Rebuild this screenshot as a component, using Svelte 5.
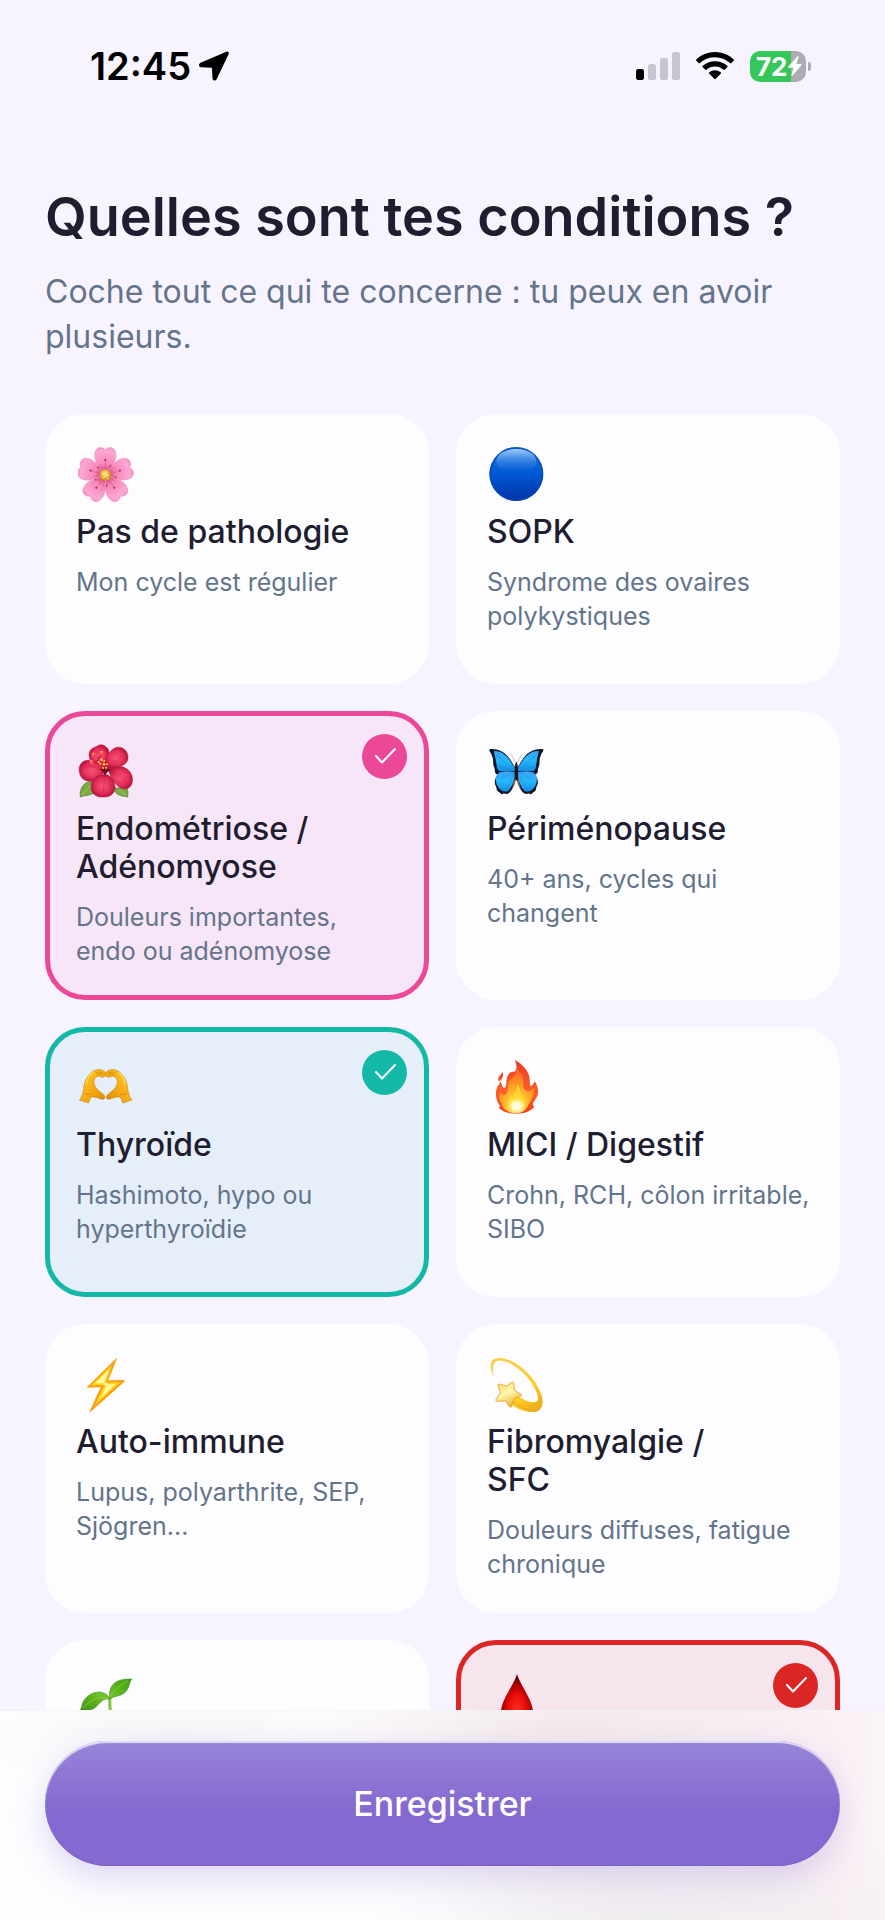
<script>
  let conditions = $state([
    { id: 'none', icon: 'blossom', title: 'Pas de pathologie', text: 'Mon cycle est régulier', tone: 'pink', checked: false },
    { id: 'sopk', icon: 'circle', title: 'SOPK', text: 'Syndrome des ovaires polykystiques', tone: 'pink', checked: false },
    { id: 'endo', icon: 'hibiscus', title: 'Endométriose / Adénomyose', text: 'Douleurs importantes, endo ou adénomyose', tone: 'pink', checked: true },
    { id: 'peri', icon: 'butterfly', title: 'Périménopause', text: '40+ ans, cycles qui changent', tone: 'pink', checked: false },
    { id: 'thyroid', icon: 'hands', title: 'Thyroïde', text: 'Hashimoto, hypo ou hyperthyroïdie', tone: 'teal', checked: true },
    { id: 'mici', icon: 'fire', title: 'MICI / Digestif', text: 'Crohn, RCH, côlon irritable, SIBO', tone: 'pink', checked: false },
    { id: 'auto', icon: 'bolt', title: 'Auto-immune', text: 'Lupus, polyarthrite, SEP, Sjögren...', tone: 'pink', checked: false },
    { id: 'fibro', icon: 'star', title: 'Fibromyalgie / SFC', text: 'Douleurs diffuses, fatigue chronique', tone: 'pink', checked: false },
    { id: 'sprout', icon: 'sprout', title: '', text: '', tone: 'teal', checked: false },
    { id: 'drop', icon: 'drop', title: '', text: '', tone: 'red', checked: true }
  ]);

  const boxes = {
    blossom: '57 48 168 168',
    circle: '60 48 168 168',
    hibiscus: '57 39 168 168',
    butterfly: '60 39 168 168',
    hands: '57 57 168 168',
    fire: '60 57 168 168',
    bolt: '57 45 168 168',
    star: '60 45 168 168',
    sprout: '0 0 56 56',
    drop: '0 0 56 56'
  };
  const turns = [0, 72, 144, 216, 288];
</script>

<div class="app">
  <header class="status">
    <div class="clock">
      <span>12:45</span>
      <svg width="30" height="30" viewBox="0 0 30 30" aria-hidden="true">
        <path d="M27.600 1.200 1.800 12.200C0 13.200.3 15.600 2.200 15.700l10.400.4c.8 0 1 .3 1 1l.5 10.400c.1 1.800 2.300 2 3 .4L29 3C29.500 1.600 28.800.7 27.600 1.200Z" stroke="#000" stroke-width="1.200" stroke-linejoin="round" />
      </svg>
    </div>
    <div class="signals">
      <svg width="44" height="28" viewBox="0 0 44 28" aria-hidden="true">
        <rect x="0" y="17" width="8" height="11" rx="2.500" />
        <g fill="#c8c5d0">
          <rect x="12" y="12" width="8" height="16" rx="2.500" />
          <rect x="24" y="6" width="8" height="22" rx="2.500" />
          <rect x="36" y="0" width="8" height="28" rx="2.500" />
        </g>
      </svg>
      <svg width="38" height="28" viewBox="0 0 38 28" aria-hidden="true">
        <path d="M19 0C11.700 0 5.200 2.800.4 7.400c-.5.5-.5 1 0 1.400l2.200 2.300c.4.4.9.4 1.300 0A22 22 0 0 1 19 5.200c5.800 0 11.100 2.200 15.100 5.900.4.400.9.400 1.300 0l2.200-2.300c.5-.4.5-.9 0-1.400C32.800 2.800 26.300 0 19 0Z" />
        <path d="M19 9.200c-4.700 0-9 1.700-12.300 4.600-.5.400-.5.900-.1 1.300l2.500 2.500c.4.400.9.400 1.300.1A13 13 0 0 1 19 14.400c3.300 0 6.300 1.200 8.600 3.300.4.300.9.300 1.300-.1l2.500-2.500c.4-.4.4-.9-.1-1.300A18.500 18.500 0 0 0 19 9.200Z" />
        <path d="M19 18.300c-2.200 0-4.200.8-5.700 2-.6.500-.5 1 0 1.500l5 5c.5.500.9.500 1.400 0l5-5c.5-.5.600-1 0-1.500a9 9 0 0 0-5.700-2Z" />
      </svg>
      <div class="battery">
        <span>72</span>
        <svg width="14" height="20" viewBox="0 0 14 20" aria-hidden="true">
          <path d="M9.500.3.400 10.600c-.5.600-.2 1.200.5 1.200h4.600l-2 7.200c-.3.900.6 1.200 1.100.6l8.900-10.300c.5-.6.200-1.200-.5-1.200H8.400l2.100-7.200c.3-.9-.5-1.200-1-.6Z" fill="#fff" />
        </svg>
      </div>
    </div>
  </header>

  <main>
    <h1>Quelles sont tes conditions ?</h1>
    <p class="intro">Coche tout ce qui te concerne : tu peux en avoir plusieurs.</p>

    <div class="grid">
      {#each conditions as item (item.id)}
        <label class="card {item.tone}" class:selected={item.checked}>
          <input type="checkbox" bind:checked={item.checked} aria-label={item.title ? undefined : 'Condition'} />
          {#if item.checked}
            <svg class="tick" viewBox="0 0 45 45" aria-hidden="true">
              <path d="m14 22 6 6.500L33 15" fill="none" stroke="#fff" stroke-width="2" stroke-linecap="round" stroke-linejoin="round" />
            </svg>
          {/if}
          <svg class="emoji" viewBox={boxes[item.icon]} aria-hidden="true">
            {#if item.icon === 'blossom'}
              <defs>
                <radialGradient id="petal" gradientUnits="userSpaceOnUse" cx="139" cy="132" r="82">
                  <stop offset=".1" stop-color="#d84b80" /><stop offset=".35" stop-color="#f585b4" /><stop offset=".85" stop-color="#fca8d6" /><stop offset="1" stop-color="#f290bd" />
                </radialGradient>
                <radialGradient id="pollen" cx=".45" cy=".4"><stop offset="0" stop-color="#ffe675" /><stop offset="1" stop-color="#d79420" /></radialGradient>
              </defs>
              {#each turns as t}
                <g transform="rotate({t} 139 136)">
                  <path d="M139 133C121 115 101 90 108 66c4-14 20-18 31-7 11-11 27-7 31 7 6 24-13 49-31 67Z" fill="url(#petal)" stroke="#ee8db5" stroke-width="1.500" />
                  <path d="M139 122V91M133 123l-9-20M145 123l9-20" stroke="#d45b8c" stroke-width="1.500" />
                  <circle cx="139" cy="90" r="3" fill="#8e2145" /><circle cx="155" cy="109" r="2.500" fill="#8e2145" />
                </g>
              {/each}
              <circle cx="139" cy="135" r="17" fill="url(#pollen)" />
              <path d="m130 130 5 3m6-8 1 6m7 4-7 2m-8 7 3-5m8 4 2 4" stroke="#fff2a8" stroke-width="3" stroke-linecap="round" />
            {:else if item.icon === 'circle'}
              <defs>
                <linearGradient id="ball" x2="0" y2="1"><stop offset="0" stop-color="#2a7bd9" /><stop offset=".48" stop-color="#0059d4" /><stop offset="1" stop-color="#0032a6" /></linearGradient>
                <linearGradient id="shine" x2="0" y2="1"><stop offset="0" stop-color="#9fceff" /><stop offset="1" stop-color="#0e63d8" stop-opacity="0" /></linearGradient>
              </defs>
              <circle cx="142" cy="132" r="81" fill="url(#ball)" /><circle cx="142" cy="132" r="78" fill="none" stroke="#0049b8" stroke-width="5" opacity=".7" />
              <ellipse cx="142" cy="94" rx="60" ry="37" fill="url(#shine)" />
            {:else if item.icon === 'hibiscus'}
              <defs>
                <radialGradient id="hib"><stop offset="0" stop-color="#f45378" /><stop offset=".65" stop-color="#e52f59" /><stop offset="1" stop-color="#b91740" /></radialGradient>
              </defs>
              <path d="M64 201c-3-25 9-46 36-48l10 31c-13 15-30 10-46 17ZM206 201c2-13 0-23-4-29l-38 3c5 22 23 22 42 26Z" fill="#7baa43" stroke="#467326" stroke-width="2" />
              <path d="m68 196 28-31m105 32-22-19" stroke="#b5d17c" stroke-width="2" />
              <g fill="url(#hib)" stroke="#b5193e" stroke-width="1.500">
                <path d="M134 118C112 115 85 92 91 69c2-14 15-16 24-21 9-7 23-3 26 4 16 5 6 33 2 60Z" />
                <path d="M136 112c-1-25 16-55 38-60 19-3 34 14 33 30 1 23-28 31-57 34Z" />
                <path d="M137 125C118 94 82 80 66 101c-11 13-5 40 9 48 18 10 45 1 62-24Z" />
                <path d="M148 121c16-18 51-15 65 5 15 20 7 50-15 51-20 1-37-22-50-56Z" />
                <path d="M142 134c-25-4-48 14-46 39 2 22 22 30 38 28 19 2 36-12 34-32-1-18-11-32-26-35Z" />
              </g>
              <path d="M137 126C110 109 88 104 75 114m74 6c23-27 37-42 46-45m-44 50c25 8 43 20 49 35m-62-28c-4 26-5 44-3 58m10-58c10 19 11 33 8 48" fill="none" stroke="#b91a42" stroke-width="2" opacity=".6" />
              <path d="M123 118q14-12 33 2-14 5-17 17-5-11-16-19Z" fill="#76071e" />
              <path d="M142 119 116 83M117 89l11-17M119 92l-20 5" stroke="#cc1643" stroke-width="4" />
              <g fill="#ffd321"><circle cx="119" cy="95" r="3" /><circle cx="127" cy="89" r="4" /><circle cx="136" cy="93" r="3" /><circle cx="124" cy="101" r="3" /><circle cx="135" cy="103" r="4" /><circle cx="144" cy="103" r="3" /><circle cx="132" cy="114" r="3" /><circle cx="141" cy="113" r="3" /></g>
              <g fill="#f44b50"><circle cx="105" cy="74" r="8" /><circle cx="129" cy="69" r="8" /><circle cx="98" cy="97" r="7" /></g>
              <g fill="#ff9b91"><circle cx="103" cy="71" r="3" /><circle cx="127" cy="66" r="3" /><circle cx="96" cy="94" r="3" /></g>
            {:else if item.icon === 'butterfly'}
              <defs><linearGradient id="wing" x2="0" y2="1"><stop offset="0" stop-color="#3aa4f5" /><stop offset=".5" stop-color="#24b7fc" /><stop offset="1" stop-color="#188ae3" /></linearGradient></defs>
              {#each [0, 1] as side}
                <g transform={side ? 'matrix(-1 0 0 1 284 0)' : undefined}>
                  <path d="M61 58c19-4 45 6 59 25 10 13 14 27 21 30v28c-1 18-10 39-22 49-7 6-12-2-18 2-5 3-8-7-13-7-7-3-4-13-9-19-4-12 0-25 8-31-14-6-7-15-12-24-5-12 0-23-6-33-1-8-9-11-8-20Z" fill="#10172a" />
                  <path d="M75 63c17-1 34 9 45 24 8 12 13 22 20 30l-2 7c-15-1-33 2-47-1-9-4-7-17-10-27-1-14-6-23-6-33Z" fill="url(#wing)" />
                  <path d="M138 127c-14-4-33-3-46 0-15 10-13 25-8 38 8 16 20 22 32 19 13-9 22-38 22-57Z" fill="url(#wing)" />
                  <path d="M136 125 80 72m55 54L91 108m45 19-43 20m42-17-20 48" stroke="#126dc0" stroke-width="1.500" opacity=".5" />
                  <path d="m139 98-13-26" stroke="#8a8f98" stroke-width="1.500" />
                  <path d="m137 140-9 41 10-20Z" fill="#9a6546" />
                </g>
              {/each}
              <ellipse cx="142" cy="124" rx="5" ry="28" fill="#171717" />
            {:else if item.icon === 'hands'}
              <defs><linearGradient id="hand" x1="0" y1="0" x2="1" y2="1"><stop offset="0" stop-color="#ffd02a" /><stop offset=".55" stop-color="#f6ac14" /><stop offset="1" stop-color="#d98500" /></linearGradient></defs>
              {#each [0, 1] as side}
                <g transform={side ? 'matrix(-1 0 0 1 280 0)' : undefined}>
                  <path d="M61 180c8-9 12-22 13-35 2-23 13-43 30-52 12-7 27-5 34 3 5 7 3 12-3 15-7 3-13-3-20-2-14 8-13 27 1 40l18 15c8 8 2 16-8 13-11-5-20-7-28-6-5 4-7 11-9 18Z" fill="url(#hand)" stroke="#bd7700" stroke-width="1.500" />
                  <path d="M77 160c7 4 13 5 20 2M110 99c9-4 16-3 21 0m-18 7c7-5 14-4 18-2" fill="none" stroke="#c27b00" stroke-width="2" />
                  <path d="M83 130c1-15 8-26 18-31" fill="none" stroke="#ffe15d" stroke-width="5" stroke-linecap="round" opacity=".7" />
                </g>
              {/each}
            {:else if item.icon === 'fire'}
              <defs>
                <linearGradient id="flame" x2="0" y2="1"><stop offset="0" stop-color="#ec3b29" /><stop offset=".6" stop-color="#fa602b" /><stop offset="1" stop-color="#f53b17" /></linearGradient>
                <radialGradient id="heat" cx=".5" cy=".9" r=".8"><stop offset="0" stop-color="#fffbd5" /><stop offset=".32" stop-color="#ffec38" /><stop offset=".7" stop-color="#ffa51f" /><stop offset="1" stop-color="#ff6c2a" /></radialGradient>
                <radialGradient id="core"><stop offset="0" stop-color="#fffff0" /><stop offset=".5" stop-color="#fffbc4" /><stop offset="1" stop-color="#fff06a" stop-opacity="0" /></radialGradient>
              </defs>
              <path d="M138 60c23 12 44 36 44 58 1 9 0 17 3 21 7-3 9-10 12-15 12 18 14 37 4 51-3 7-7 10-10 17l4 10c-14 15-33 19-52 19-26 0-46-7-54-19l5-3c-12-14-18-38-9-58 4-8 9-12 9-17 5 5 3 16 11 20 8-3 7-11 7-20 2-18 9-32 23-28 12-7 7-22 3-36Z" fill="url(#flame)" />
              <path d="M140 83c18 17 27 29 23 48-2 17 11 25 19 22 7-2 11-8 13-12 1 25-6 38-15 50-8 18-18 28-39 29-24 0-40-13-44-31-7-8-7-22-3-32 8 12 16 10 20 0 7-11 0-29 9-38 10-8 22-15 17-36Z" fill="url(#heat)" opacity=".8" />
              <path d="M145 132c11 15 6 27 16 35 9 10 8 28-1 40-8 11-24 12-33 4-12-10-13-28-5-36 9-8 22-14 23-43Z" fill="#ffe43b" opacity=".55" />
              <ellipse cx="143" cy="198" rx="28" ry="24" fill="url(#core)" />
              <path d="M102 96c-7 7-15 15-15 25l6 2c8-8 10-13 9-27Z" fill="#ef492e" />
            {:else if item.icon === 'bolt'}
              <path d="m172 52-87 85c-3 2-1 4 2 3l38-1-33 72c-1 2 1 3 3 1l101-90c3-3 1-6-3-5l-45 1 25-63c1-3 1-5-1-3Z" fill="#fba112" />
              <path d="m158 73-61 60 40-2-29 61 76-68-43 1Z" fill="#ffd923" />
              <path d="m149 87-40 40 38-2-20 43 42-38-36 1Z" fill="#fffba7" />
            {:else if item.icon === 'star'}
              <defs>
                <linearGradient id="trail" x1="0" y1="0" x2="1" y2="1"><stop offset="0" stop-color="#fccb4c" /><stop offset=".65" stop-color="#ffce25" /><stop offset="1" stop-color="#e7a318" /></linearGradient>
                <linearGradient id="gold" x1=".2" y1="0" x2=".7" y2="1"><stop offset="0" stop-color="#ffdf6e" /><stop offset=".45" stop-color="#fff5b0" /><stop offset="1" stop-color="#e9a91d" /></linearGradient>
              </defs>
              <path d="M76 110C58 78 61 51 91 51c50 2 107 56 126 109 11 34-2 57-33 53-30-3-58-18-72-38l30-14c20 15 42 25 57 22 14-4 7-23-1-39C177 101 132 63 97 59 72 56 67 79 76 110Z" fill="url(#trail)" />
              <path d="M128 178c21 20 52 34 78 27" stroke="#e0a118" stroke-width="4" fill="none" opacity=".6" />
              <path d="M87 133c-2-4 3-4 7-3l19 5 15-11c4-2 7-1 7 4l1 20 19 11c4 3 4 5 0 7l-20 7-7 23c-2 4-4 4-7 0l-12-17-23 2c-6 0-7-3-4-7l12-18Z" fill="url(#gold)" stroke="#eba931" stroke-width="3" />
            {:else if item.icon === 'sprout'}
              <defs><linearGradient id="leaf" x1="0" y1="1" x2="1" y2="0"><stop offset="0" stop-color="#398f13" /><stop offset=".5" stop-color="#72c526" /><stop offset="1" stop-color="#3c9c14" /></linearGradient></defs>
              <path d="M32 25c-1 10 1 21 3 31" fill="none" stroke="#82c443" stroke-width="3" />
              <path d="M32 27C29 12 40 6 54 7c-3 3-2 7-5 11-4 7-12 5-17 9ZM32 27C26 15 10 20 5 30c-2 5-1 7-4 9 5 1 12 0 17-4 4-4 7-9 14-8Z" fill="url(#leaf)" stroke="#378c17" stroke-width=".5" />
              <path d="M33 24C37 16 44 12 50 9M29 26C20 24 11 29 5 36" fill="none" stroke="#9bd648" stroke-width=".7" />
            {:else}
              <defs><radialGradient id="blood" cx=".5" cy=".65" r=".62"><stop offset="0" stop-color="#ff2d22" /><stop offset=".45" stop-color="#e90c07" /><stop offset=".75" stop-color="#a60000" /><stop offset="1" stop-color="#3c0000" /></radialGradient></defs>
              <path d="M28 2c-2 9-16 26-16 38a16 16 0 0 0 32 0C44 28 30 11 28 2Z" fill="url(#blood)" />
            {/if}
          </svg>
          {#if item.title}
            <span class="title">{item.title}</span>
            <span class="text">{item.text}</span>
          {/if}
        </label>
      {/each}
    </div>
  </main>

  <footer>
    <button type="button">Enregistrer</button>
  </footer>
</div>

<style>
  :global(body) {
    margin: 0;
    background: #f7f4ff;
  }
  .app {
    display: flex;
    flex-direction: column;
    height: 100vh;
    font-family: Inter, "Liberation Sans", sans-serif;
    color: #211d30;
    background: #f7f4ff;
  }
  .status {
    display: flex;
    flex: none;
    align-items: center;
    justify-content: space-between;
    padding: 42px 79px 0 90px;
    color: #000;
  }
  .clock,
  .signals {
    display: flex;
    align-items: center;
    height: 48px;
  }
  .clock {
    gap: 8px;
    font-size: 38px;
    font-weight: 600;
    line-height: 48px;
  }
  .signals {
    gap: 16px;
  }
  .battery {
    position: relative;
    display: flex;
    align-items: center;
    box-sizing: border-box;
    width: 56px;
    height: 31px;
    padding-left: 6px;
    border-radius: 10px;
    background: linear-gradient(90deg, #34c759 73%, #aeacb3 73%);
    color: #fff;
    font-size: 26px;
    font-weight: 700;
    line-height: 31px;
  }
  .battery::after {
    content: "";
    position: absolute;
    top: 11px;
    right: -5px;
    width: 3px;
    height: 9px;
    border-radius: 0 4px 4px 0;
    background: #aeacb3;
  }
  main {
    flex: 1;
    min-height: 0;
    padding: 94px 45px 0;
    overflow-y: auto;
    scrollbar-width: none;
  }
  h1 {
    margin: 0;
    font-size: 54px;
    font-weight: 600;
    line-height: 66px;
  }
  .intro {
    margin: 19px 0 55px;
    color: #64748b;
    font-size: 32px;
    line-height: 45px;
  }
  .grid {
    display: grid;
    grid-template-columns: 1fr 1fr;
    gap: 27px;
  }
  .card {
    --tone: #ec4899;
    --tint: #f7e6f7;
    position: relative;
    display: flex;
    flex-direction: column;
    box-sizing: border-box;
    min-height: 270px;
    padding: 27px 22px 27px 26px;
    border: 5px solid transparent;
    border-radius: 40px;
    background: #fdfdff;
    cursor: pointer;
  }
  .teal {
    --tone: #14b8a6;
    --tint: #e6eff9;
  }
  .red {
    --tone: #dc2626;
    --tint: #f6e5ed;
  }
  .selected {
    border-color: var(--tone);
    background: var(--tint);
  }
  input {
    position: absolute;
    top: 18px;
    right: 17px;
    width: 45px;
    height: 45px;
    margin: 0;
    border-radius: 50%;
    appearance: none;
  }
  input:checked {
    background: var(--tone);
  }
  .tick {
    position: absolute;
    top: 18px;
    right: 17px;
    width: 45px;
    height: 45px;
    pointer-events: none;
  }
  .emoji {
    width: 56px;
    height: 56px;
    margin: 0 0 11px 2px;
  }
  .title {
    padding-right: 44px;
    font-size: 32px;
    font-weight: 500;
    line-height: 38px;
  }
  .text {
    margin-top: 14px;
    color: #64748b;
    font-size: 25px;
    line-height: 34px;
  }
  footer {
    flex: none;
    padding: 30px 45px 54px;
    border-top: 1px solid #f4f2f7;
    background:
      radial-gradient(ellipse 200px 50px at 20% 14%, #f5f5f7, transparent),
      radial-gradient(ellipse 280px 80px at 64% 10%, #f3e9eb, transparent),
      radial-gradient(ellipse 300px 100px at 75% 100%, #efecf0, transparent),
      linear-gradient(90deg, #fdfdff 50%, #f8f3f6 72%, #fbf0f5 95%, #faf4f8);
  }
  button {
    display: block;
    width: 100%;
    height: 125px;
    padding: 0;
    border: 0;
    border-radius: 63px;
    background: linear-gradient(#9884d9, #8469d0 56%, #8469d0);
    box-shadow:
      inset 0 2px 1px #e2def5,
      inset 0 -1px 1px #7b61c5,
      0 12px 32px #8469d040;
    color: #fff;
    font: 500 34px/44px Inter, "Liberation Sans", sans-serif;
    cursor: pointer;
  }
</style>
